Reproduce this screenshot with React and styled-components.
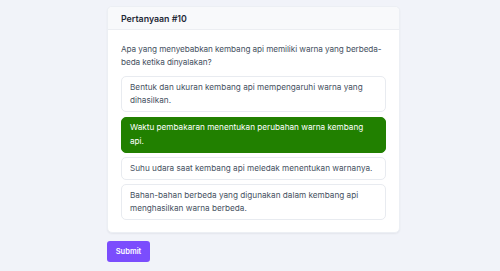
import React from "react";
import styled, { createGlobalStyle } from "styled-components";

const Global = createGlobalStyle`
  html, body { margin: 0; padding: 0; background: #f1f3f9; }
  body { font-family: Inter, "Noto Sans", sans-serif; -webkit-font-smoothing: antialiased; }
  * { box-sizing: border-box; }
`;

const Page = styled.div`
  width: 500px;
  height: 271px;
  padding: 6px 100px 0 107px;
  display: flex;
  flex-direction: column;
  gap: 8px;
`;

const Card = styled.div`
  background: #ffffff;
  border-radius: 5px;
  box-shadow: 0 1px 2px rgba(15, 23, 42, 0.06);
  border: 1px solid #eceff4;
  overflow: hidden;
`;

const Header = styled.div`
  background: #f8f9fb;
  border-bottom: 1px solid #eceef2;
  padding: 0 13px;
  height: 23px;
  display: flex;
  align-items: center;
  font-size: 8.8px;
  font-weight: 600;
  color: #1f2937;
`;

const Body = styled.div`
  padding: 13px 13px 12px;
`;

const Question = styled.p`
  margin: 0 0 7px;
  font-size: 8.2px;
  letter-spacing: -0.08px;
  line-height: 13px;
  color: #465161;
`;

const Options = styled.div`
  display: flex;
  flex-direction: column;
  gap: 4.5px;
`;

const Option = styled.div`
  border-radius: 5px;
  padding: 3.5px 8px;
  font-size: 8.2px;
  line-height: 13.5px;
  border: 1px solid ${(p) => (p.$selected ? "#218000" : "#e8ebf0")};
  background: ${(p) => (p.$selected ? "#218000" : "#ffffff")};
  color: ${(p) => (p.$selected ? "#ffffff" : "#465161")};
`;

const SubmitButton = styled.button`
  align-self: flex-start;
  width: 43px;
  height: 21px;
  border: none;
  border-radius: 3px;
  background: #7b4dfd;
  color: #ffffff;
  font-family: inherit;
  font-size: 7.5px;
  font-weight: 600;
  padding: 0;
`;

const options = [
  "Bentuk dan ukuran kembang api mempengaruhi warna yang dihasilkan.",
  "Waktu pembakaran menentukan perubahan warna kembang api.",
  "Suhu udara saat kembang api meledak menentukan warnanya.",
  "Bahan-bahan berbeda yang digunakan dalam kembang api menghasilkan warna berbeda.",
];

export default function App() {
  return (
    <>
      <Global />
      <Page>
        <Card>
          <Header>Pertanyaan #10</Header>
          <Body>
            <Question>
              Apa yang menyebabkan kembang api memiliki warna yang berbeda-beda ketika dinyalakan?
            </Question>
            <Options>
              {options.map((o, i) => (
                <Option key={i} $selected={i === 1}>
                  {o}
                </Option>
              ))}
            </Options>
          </Body>
        </Card>
        <SubmitButton>Submit</SubmitButton>
      </Page>
    </>
  );
}
